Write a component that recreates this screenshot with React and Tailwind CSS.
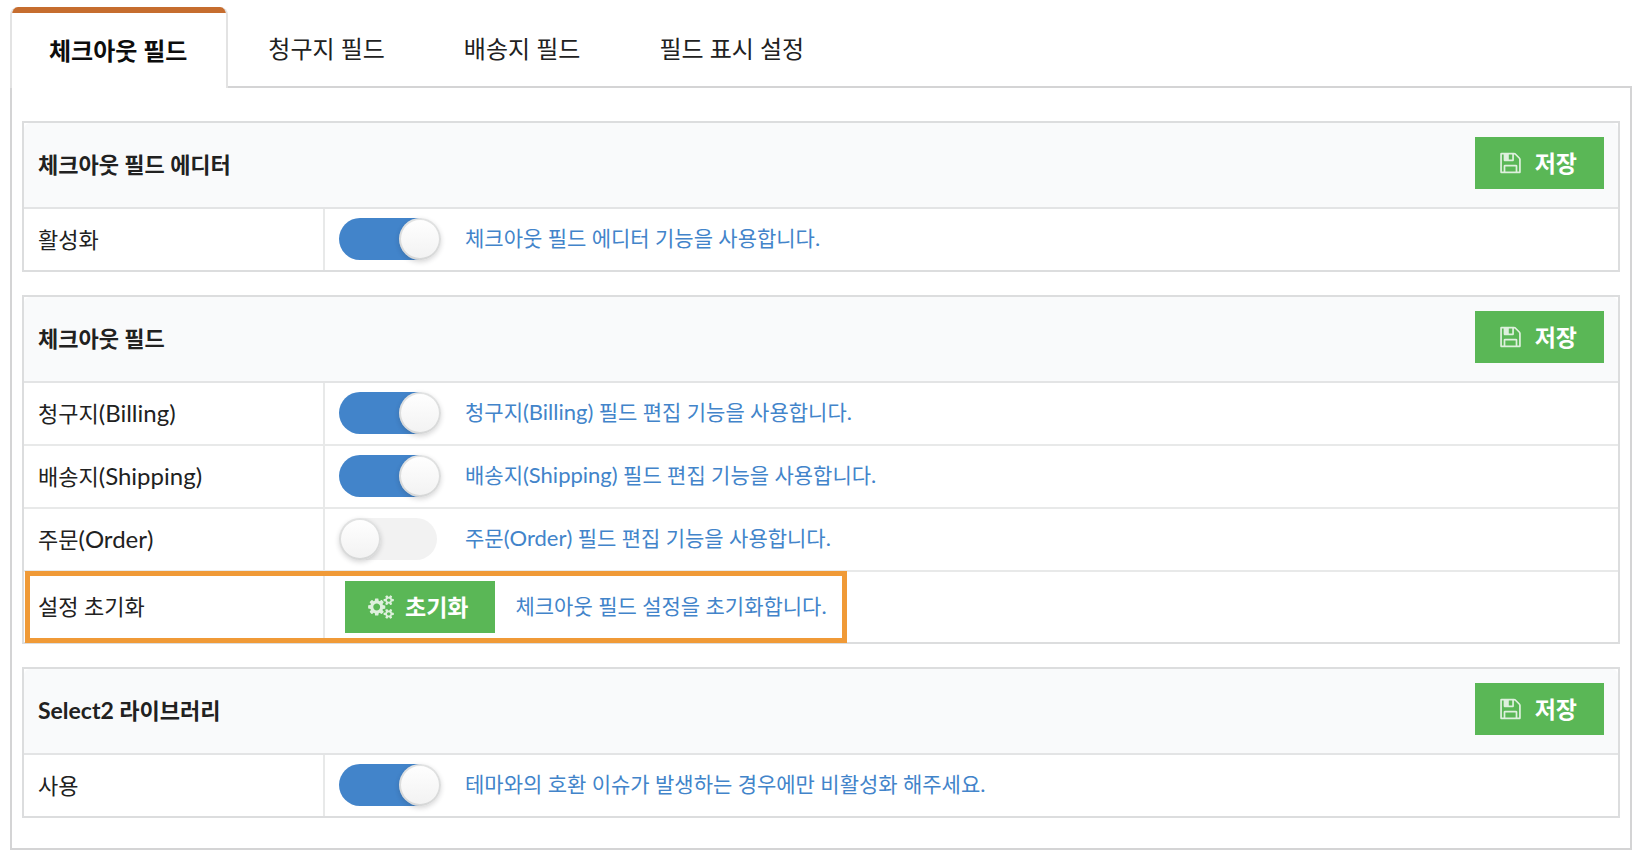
/**
 * App.jsx
 * =======
 * Checkout field settings: tabs, setting panels with toggles, save / reset buttons
 */
import React, { useState } from 'react';

const TABS = ['체크아웃 필드', '청구지 필드', '배송지 필드', '필드 표시 설정'];

const SaveIcon = () => (
  <svg viewBox="128 0 1536 1792" className="w-[21px] h-6 fill-current" aria-hidden="true">
    <path d="M512 1536h768v-384h-768v384zm896 0h128v-896q0-14-10-38.5t-20-34.5l-281-281q-10-10-34-20t-39-10v416q0 40-28 68t-68 28h-576q-40 0-68-28t-28-68v-416h-128v1280h128v-416q0-40 28-68t68-28h832q40 0 68 28t28 68v416zm-384-928v-320q0-13-9.5-22.5t-22.5-9.5h-192q-13 0-22.5 9.5t-9.5 22.5v320q0 13 9.5 22.5t22.5 9.5h192q13 0 22.5-9.5t9.5-22.5zm640 32v928q0 40-28 68t-68 28h-1344q-40 0-68-28t-28-68v-1344q0-40 28-68t68-28h928q40 0 88 20t76 48l280 280q28 28 48 76t20 88z" />
  </svg>
);

const GearsIcon = () => (
  <svg viewBox="0 0 1920 1792" className="w-[26px] h-6 fill-current" aria-hidden="true">
    <path d="M896 896q0-106-75-181t-181-75-181 75-75 181 75 181 181 75 181-75 75-181zm768 512q0-52-38-90t-90-38-90 38-38 90q0 53 37.5 90.5t90.5 37.5 90.5-37.5 37.5-90.5zm0-1024q0-52-38-90t-90-38-90 38-38 90q0 53 37.5 90.5t90.5 37.5 90.5-37.5 37.5-90.5zm-384 421v185q0 10-7 19.5t-16 10.5l-155 24q-11 35-32 76 34 48 90 115 7 11 7 20 0 12-7 19-23 30-82.5 89.5t-78.5 59.5q-11 0-21-7l-115-90q-37 19-77 31-11 108-23 155-7 24-30 24h-186q-11 0-20-7.5t-10-17.5l-23-153q-34-10-75-31l-118 89q-7 7-20 7-11 0-21-8-144-133-144-160 0-9 7-19 10-14 41-53t47-61q-23-44-35-82l-152-24q-10-1-17-9.5t-7-19.5v-185q0-10 7-19.5t16-10.5l155-24q11-35 32-76-34-48-90-115-7-11-7-20 0-12 7-20 22-30 82-89t79-59q11 0 21 7l115 90q34-18 77-32 11-108 23-154 7-24 30-24h186q11 0 20 7.5t10 17.5l23 153q34 10 75 31l118-89q8-7 20-7 11 0 21 8 144 133 144 160 0 8-7 19-12 16-42 54t-45 60q23 48 34 82l152 23q10 2 17 10.5t7 19.5zm640 533v140q0 16-149 31-12 27-30 52 51 113 51 138 0 4-4 7-122 71-124 71-8 0-46-47t-52-68q-20 2-30 2t-30-2q-14 21-52 68t-46 47q-2 0-124-71-4-3-4-7 0-25 51-138-18-25-30-52-149-15-149-31v-140q0-16 149-31 13-29 30-52-51-113-51-138 0-4 4-7 4-2 35-20t59-34 30-16q8 0 46 46.5t52 67.5q20-2 30-2t30 2q51-71 92-112l6-2q4 0 124 70 4 3 4 7 0 25-51 138 17 23 30 52 149 15 149 31zm0-1024v140q0 16-149 31-12 27-30 52 51 113 51 138 0 4-4 7-122 71-124 71-8 0-46-47t-52-68q-20 2-30 2t-30-2q-14 21-52 68t-46 47q-2 0-124-71-4-3-4-7 0-25 51-138-18-25-30-52-149-15-149-31v-140q0-16 149-31 13-29 30-52-51-113-51-138 0-4 4-7 4-2 35-20t59-34 30-16q8 0 46 46.5t52 67.5q20-2 30-2t30 2q51-71 92-112l6-2q4 0 124 70 4 3 4 7 0 25-51 138 17 23 30 52 149 15 149 31z" />
  </svg>
);

// Latin runs are set slightly larger than the Korean text around them
const Mixed = ({ text, latin }) =>
  text.split(/([\x21-\x7e]+)/).map((part, i) =>
    i % 2 ? (
      <span key={i} className={`leading-none ${latin}`}>
        {part}
      </span>
    ) : (
      part
    )
  );

const GreenButton = ({ icon, children, onClick }) => (
  <button
    type="button"
    onClick={onClick}
    className="flex items-center h-[52px] pl-[23px] pr-[27px] gap-[11px] bg-[#5ab756] text-white text-[23px] leading-6 font-bold whitespace-nowrap"
  >
    <span className="w-[26px] flex justify-center opacity-80">{icon}</span>
    {children}
  </button>
);

const Description = ({ text }) => (
  <span className="pb-0.5 text-[21px] leading-8 text-[#4284ca]">
    <Mixed text={text} latin="text-[22px]" />
  </span>
);

const Panel = ({ title, children }) => (
  <section className="border-2 border-[#dcddde]">
    <div className="flex items-start justify-between h-[86px] pt-[14px] px-[14px] bg-[#f9fafb] border-b-2 border-[#e3e4e5] rounded-t-md">
      <h2 className="text-[22px] leading-[56px] font-bold">
        <Mixed text={title} latin="text-[23px]" />
      </h2>
      <GreenButton icon={<SaveIcon />}>저장</GreenButton>
    </div>
    <div className="divide-y-2 divide-[#e8e9e9]">{children}</div>
  </section>
);

const ToggleRow = ({ id, label, description, defaultOn = false }) => {
  const [on, setOn] = useState(defaultOn);

  return (
    <div className="flex">
      <label
        htmlFor={id}
        className="w-[301px] shrink-0 px-[14px] border-r-2 border-[#e8e9e9] text-[22px] leading-[61px]"
      >
        <Mixed text={label} latin="text-[24px]" />
      </label>
      <div className="flex items-center h-[61px] pl-[14px] pb-px gap-7">
        <input
          id={id}
          type="checkbox"
          checked={on}
          onChange={(e) => setOn(e.target.checked)}
          className="appearance-none shrink-0 w-[98px] h-[42px] rounded-full bg-[#f2f2f2] checked:bg-[#4284ca] cursor-pointer before:block before:size-[42px] before:rounded-full before:bg-linear-to-b before:from-white before:to-[#f2f2f2] before:shadow-[0_2px_5px_rgba(34,36,38,0.18),inset_0_0_0_2px_rgba(34,36,38,0.13)] checked:before:translate-x-[60px]"
        />
        <Description text={description} />
      </div>
    </div>
  );
};

const App = () => {
  const [activeTab, setActiveTab] = useState(0);

  return (
    <div
      lang="ko"
      className="bg-white px-[10px] pt-[7px] pb-[10px] text-[#212121] font-['Lato','Noto_Sans_CJK_KR',sans-serif]"
    >
      {/* Tabs */}
      <div role="tablist" className="flex gap-px border-b-2 border-[#d4d4d5]">
        {TABS.map((tab, i) => (
          <button
            key={tab}
            type="button"
            role="tab"
            aria-selected={activeTab === i}
            onClick={() => setActiveTab(i)}
            className={
              activeTab === i
                ? 'flex flex-col h-[81px] -mb-0.5 border-x-2 border-[#e3e3e3] rounded-t-lg bg-white text-2xl font-bold text-[#0d0d0d] overflow-hidden'
                : 'h-[79px] px-[39px] pt-1 text-2xl leading-[75px] text-[#212121]'
            }
          >
            {activeTab === i && <span className="w-full h-1.5 bg-[#c66d2f]" />}
            <span className={activeTab === i ? 'pl-[37px] pr-[39px] leading-[75px]' : ''}>{tab}</span>
          </button>
        ))}
      </div>

      {/* Panels */}
      <main className="flex flex-col gap-[23px] px-[10px] pt-[33px] pb-[30px] border-x-2 border-b-2 border-[#d4d4d5]">
        <Panel title="체크아웃 필드 에디터">
          <ToggleRow id="editor" label="활성화" description="체크아웃 필드 에디터 기능을 사용합니다." defaultOn />
        </Panel>

        <Panel title="체크아웃 필드">
          <ToggleRow id="billing" label="청구지(Billing)" description="청구지(Billing) 필드 편집 기능을 사용합니다." defaultOn />
          <ToggleRow id="shipping" label="배송지(Shipping)" description="배송지(Shipping) 필드 편집 기능을 사용합니다." defaultOn />
          <ToggleRow id="order" label="주문(Order)" description="주문(Order) 필드 편집 기능을 사용합니다." />
          <div className="relative flex">
            <div className="w-[301px] shrink-0 px-[14px] border-r-2 border-[#e8e9e9] text-[22px] leading-[70px]">
              설정 초기화
            </div>
            <div className="flex items-center h-[70px] pl-5 gap-5">
              <GreenButton icon={<GearsIcon />}>초기화</GreenButton>
              <Description text="체크아웃 필드 설정을 초기화합니다." />
            </div>
            {/* Highlight frame around the reset option */}
            <div className="absolute left-px -top-px -bottom-px w-[822px] border-[5px] border-[#f09a37] pointer-events-none" />
          </div>
        </Panel>

        <Panel title="Select2 라이브러리">
          <ToggleRow id="select2" label="사용" description="테마와의 호환 이슈가 발생하는 경우에만 비활성화 해주세요." defaultOn />
        </Panel>
      </main>
    </div>
  );
};

export default App;
